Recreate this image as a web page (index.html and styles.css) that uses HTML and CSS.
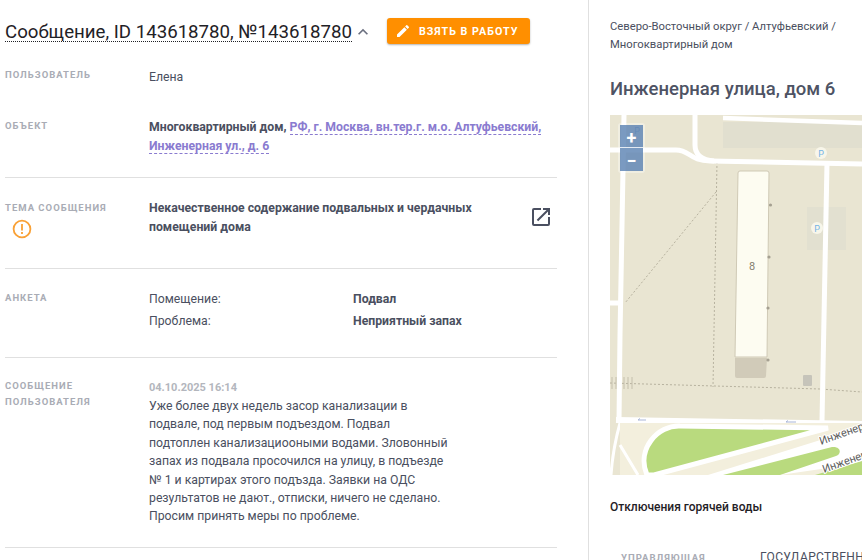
FILE: index.html
```html
<!DOCTYPE html>
<html lang="ru">
<head>
<meta charset="utf-8">
<title>Сообщение</title>
<link rel="stylesheet" href="styles.css">
</head>
<body>
<div class="page">
  <main class="main">
    <header class="head">
      <h1 class="title">Сообщение, ID 143618780, №143618780</h1>
      <svg class="chev" viewBox="0 0 24 24" width="20" height="20"><path d="M7.41 15.41 12 10.83l4.59 4.58L18 14l-6-6-6 6z"/></svg>
      <button class="take">
        <svg viewBox="0 0 24 24" width="16" height="16"><path d="M3 17.25V21h3.75L17.81 9.94l-3.75-3.75L3 17.25zM20.71 7.04a1 1 0 0 0 0-1.41l-2.34-2.34a1 1 0 0 0-1.41 0l-1.83 1.83 3.75 3.75 1.83-1.83z"/></svg>
        <span>ВЗЯТЬ В РАБОТУ</span>
      </button>
    </header>

    <section class="row row-user">
      <div class="label">ПОЛЬЗОВАТЕЛЬ</div>
      <div class="val">Елена</div>
    </section>

    <section class="row row-obj line">
      <div class="label">ОБЪЕКТ</div>
      <div class="val strong">Многоквартирный дом, <a class="addr">РФ, г. Москва, вн.тер.г. м.о. Алтуфьевский, Инженерная ул., д. 6</a></div>
    </section>

    <section class="row row-topic line">
      <div class="label">ТЕМА СООБЩЕНИЯ
        <svg class="warn" viewBox="0 0 20 20" width="20" height="20"><circle cx="10" cy="10" r="8.4" fill="none" stroke="#f9a136" stroke-width="1.8"/><path d="M9.1 5h1.8v6.4H9.1zM9.1 13h1.8v1.9H9.1z" fill="#f9a136"/></svg>
      </div>
      <div class="val strong topic">Некачественное содержание подвальных и чердачных помещений дома</div>
      <svg class="ext" viewBox="0 0 24 24" width="24" height="24"><path d="M19 19H5V5h7V3H5a2 2 0 0 0-2 2v14a2 2 0 0 0 2 2h14a2 2 0 0 0 2-2v-7h-2v7zM14 3v2h3.59l-9.83 9.83 1.41 1.41L19 6.41V10h2V3h-7z"/></svg>
    </section>

    <section class="row row-form line">
      <div class="label">АНКЕТА</div>
      <div class="pairs">
        <div class="pkey">Помещение:</div><div class="pval">Подвал</div>
        <div class="pkey">Проблема:</div><div class="pval">Неприятный запах</div>
      </div>
    </section>

    <section class="row row-msg line">
      <div class="label">СООБЩЕНИЕ<br>ПОЛЬЗОВАТЕЛЯ</div>
      <div class="msg">
        <div class="date">04.10.2025 16:14</div>
        <p class="text">Уже более двух недель засор канализации в подвале, под первым подъездом. Подвал подтоплен канализациооными водами. Зловонный запах из подвала просочился на улицу, в подъезде № 1 и картирах этого подъзда. Заявки на ОДС результатов не дают., отписки, ничего не сделано. Просим принять меры по проблеме.</p>
      </div>
    </section>
  </main>

  <aside class="side">
    <div class="crumbs">Северо-Восточный округ / Алтуфьевский / Многоквартирный дом</div>
    <h2 class="house">Инженерная улица, дом 6</h2>
    <div class="map">
      <svg class="mapsvg" viewBox="0 0 252 360" width="252" height="360">
        <rect width="252" height="360" fill="#e9e5d2"/>
        <rect x="113" y="7" width="139" height="26" fill="#e1dfcf"/>
        <rect x="197" y="92" width="39" height="43" fill="#e2e0d0"/>
        <g fill="none" stroke="#b7b29f" stroke-width="1" stroke-dasharray="2 2">
          <path d="M107 47 103 272"/>
          <path d="M106 77 15 188"/>
          <path d="M0 268 210 274 252 277"/>
        </g>
        <path d="M2 262v12M6 262v12M10 262v12M14 262v12M18 262v12M22 262v12" stroke="#c4bfac" stroke-width="1" fill="none"/>
        <g fill="none" stroke="#fff" stroke-linecap="butt">
          <path d="M0 35H66C80 35 80 46 100 46L252 49" stroke-width="5"/>
          <path d="M85 0V30C85 40 92 45 104 46" stroke-width="5"/>
          <path d="M113 3 252 8" stroke-width="4.5"/>
          <path d="M14 0 10 220 9 306" stroke-width="5"/>
          <path d="M217 48 212 306" stroke-width="5"/>
          <path d="M0 188H12" stroke-width="5"/>
          <path d="M6 305 252 309" stroke-width="6"/>
        </g>
        <path d="M10 308H252V360H10Z" fill="#f3efdd"/>
        <path d="M37 360C26 334 48 310 70 311L218 313 44 360Z" fill="#b9da7e" stroke="#fff" stroke-width="5"/>
        <path d="M98 360 252 312V348L170 360Z" fill="#fff"/>
        <path d="M113 360 222 332C231 331 232 339 226 341L170 360Z" fill="#b9da7e"/>
        <path d="M205 360 252 346V360Z" fill="#b9da7e"/>
        <path d="M10 308C4 330 2 345 1 360M10 330 28 360" fill="none" stroke="#fff" stroke-width="3"/>
        <path d="M10 308H30C16 312 12 325 10 330Z" fill="#f3efdd"/>
        <path d="M36 305H28l2-1.500M186 307H176l2-1.500" fill="none" stroke="#a9b6d8" stroke-width="1"/>
        <path d="M128 58q0-2 2-2h27q2 0 2 2L157 242H125Z" fill="#fdfcf1" stroke="#cfc9b5" stroke-width="1"/>
        <path d="M125 243H157L156 261q0 2-2 2H127q-2 0-2-2Z" fill="#d1cbb9"/>
        <g fill="#a5a091"><circle cx="160.500" cy="90" r="1.600"/><circle cx="159" cy="142" r="1.600"/><circle cx="158" cy="193" r="1.600"/><circle cx="158" cy="245" r="1.600"/></g>
        <rect x="193" y="260" width="9" height="11" rx="1" fill="#c6c4ba"/>
        <text x="142" y="155" class="hn">8</text>
        <circle cx="211" cy="38" r="6" fill="#f8f6ea"/><text x="211" y="41.500" class="pk">P</text>
        <circle cx="207" cy="113" r="6" fill="#f8f6ea"/><text x="207" y="116.500" class="pk">P</text>
        <text x="27" y="19" class="pk pk-dim">P</text>
        <text x="211" y="330" class="street" transform="rotate(-20 211 330)">Инженерная</text>
        <text x="214" y="358" class="street" transform="rotate(-20 214 358)">Инженерная</text>
      </svg>
      <div class="zoom">
        <div class="zbtn">+</div>
        <div class="zbtn">−</div>
      </div>
    </div>
    <h3 class="off">Отключения горячей воды</h3>
    <div class="table-head">
      <div class="label tlabel">УПРАВЛЯЮЩАЯ</div>
      <div class="tval">ГОСУДАРСТВЕННОЕ</div>
    </div>
  </aside>
</div>
</body>
</html>
```
FILE: styles.css
```css
* { box-sizing: border-box; }
html, body { margin: 0; height: 560px; overflow: hidden; background: #fff; }
body { font-family: Roboto, "Liberation Sans", sans-serif; color: #4a4f60; }
.page { display: flex; width: 862px; height: 560px; overflow: hidden; }
.main { width: 589px; flex: none; padding: 0 31px 0 5px; border-right: 1px solid #e0e0e0; }
.head { display: flex; align-items: center; height: 63px; }
.title { margin: 0; font-size: 18.660px; font-weight: 400; color: #1f2126; line-height: 22px; border-bottom: 1px dotted #1f2126; white-space: nowrap; height: 21px; }
.chev { margin-left: 1px; fill: #6b7080; }
.take { margin-left: 14px; margin-top: -1px; width: 143px; height: 26px; display: flex; align-items: center; gap: 8px; padding: 0 0 0 8px; border: 0; border-radius: 3px; background: #ff8f00; color: #fff; font: 700 10.700px Roboto, sans-serif; letter-spacing: 1px; box-shadow: 0 1px 2px rgba(0,0,0,.3); }
.take svg { fill: #fff; flex: none; }
.row { display: flex; position: relative; font-size: 12.250px; line-height: 18px; }
.line { border-bottom: 1px solid #e0e0e0; }
.label { width: 144px; flex: none; font-size: 9.500px; font-weight: 700; letter-spacing: 1px; color: #a9acb5; line-height: 15.500px; }
.val { flex: 1; line-height: 19px; }
.strong { font-weight: 700; }
.addr { color: #8a7bd0; border-bottom: 1px dashed #8a7bd0; }
.row-user { height: 51px; padding-top: 4px; }
.row-user .val { margin-top: 1px; }
.row-obj { height: 64px; padding-top: 4px; }
.row-obj .val { padding-right: 5px; }
.row-topic { height: 91px; padding-top: 22px; }
.warn { display: block; margin: 3px 0 0 7px; }
.topic { padding-right: 60px; margin-top: -1px; }
.ext { position: absolute; right: 4px; top: 27px; fill: #4a4f60; }
.row-form { height: 89px; padding-top: 21px; }
.pairs { display: grid; grid-template-columns: 204px 1fr; grid-auto-rows: 22px; align-items: start; }
.pkey { line-height: 18px; }
.pval { font-weight: 700; line-height: 18px; }
.row-msg { height: 190px; padding-top: 20px; }
.msg { width: 300px; padding-top: 1px; }
.date { font-weight: 700; color: #b3b6bd; font-size: 11px; line-height: 17px; margin-bottom: 1px; }
.text { margin: 0; line-height: 18.400px; }
.side { flex: 1; min-width: 0; padding: 18px 0 0 21px; overflow: hidden; }
.crumbs { width: 240px; font-size: 11.250px; line-height: 18px; }
.house { margin: 23px 0 14px; font-size: 18.500px; font-weight: 500; line-height: 24px; white-space: nowrap; color: #4e5364; }
.map { position: relative; width: 252px; height: 360px; overflow: hidden; }
.mapsvg { display: block; }
.hn { font: 11px Roboto, sans-serif; fill: #85806f; text-anchor: middle; }
.pk { font: 9px Roboto, sans-serif; fill: #73b3e6; text-anchor: middle; }
.pk-dim { fill: #6a8bbf; }
.street { font: 11px Roboto, sans-serif; fill: #5b5b5b; stroke: #fff; stroke-width: 2px; paint-order: stroke; }
.zoom { position: absolute; left: 8px; top: 8px; padding: 2px; border-radius: 3px; background: rgba(255,255,255,.35); }
.zbtn { width: 23px; height: 23px; background: rgba(85,125,175,.78); color: #fff; font: 700 18px/25px Roboto, sans-serif; text-align: center; border-bottom: 1px solid rgba(255,255,255,.8); }
.zbtn:last-child { border-bottom: 0; }
.off { margin: 24px 0 0; font-size: 12px; font-weight: 500; line-height: 16px; color: #1f2126; }
.table-head { display: flex; margin-top: 35px; white-space: nowrap; }
.tlabel { width: 150px; padding-left: 11px; }
.tval { font-size: 12px; line-height: 15px; letter-spacing: .3px; }
```
